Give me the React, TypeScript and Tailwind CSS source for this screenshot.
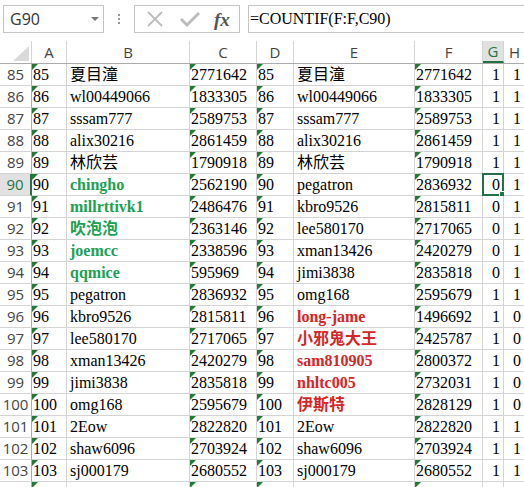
import type { ReactElement } from "react";

type Row = {
  n: number;
  b: string;
  c: string;
  e: string;
  f: string;
  g: number;
  h: number;
  bColor?: "green";
  eColor?: "red";
};

const rows: Row[] = [
  { n: 85, b: "夏目潼", c: "2771642", e: "夏目潼", f: "2771642", g: 1, h: 1 },
  { n: 86, b: "wl00449066", c: "1833305", e: "wl00449066", f: "1833305", g: 1, h: 1 },
  { n: 87, b: "sssam777", c: "2589753", e: "sssam777", f: "2589753", g: 1, h: 1 },
  { n: 88, b: "alix30216", c: "2861459", e: "alix30216", f: "2861459", g: 1, h: 1 },
  { n: 89, b: "林欣芸", c: "1790918", e: "林欣芸", f: "1790918", g: 1, h: 1 },
  { n: 90, b: "chingho", c: "2562190", e: "pegatron", f: "2836932", g: 0, h: 1, bColor: "green" },
  { n: 91, b: "millrttivk1", c: "2486476", e: "kbro9526", f: "2815811", g: 0, h: 1, bColor: "green" },
  { n: 92, b: "吹泡泡", c: "2363146", e: "lee580170", f: "2717065", g: 0, h: 1, bColor: "green" },
  { n: 93, b: "joemcc", c: "2338596", e: "xman13426", f: "2420279", g: 0, h: 1, bColor: "green" },
  { n: 94, b: "qqmice", c: "595969", e: "jimi3838", f: "2835818", g: 0, h: 1, bColor: "green" },
  { n: 95, b: "pegatron", c: "2836932", e: "omg168", f: "2595679", g: 1, h: 1 },
  { n: 96, b: "kbro9526", c: "2815811", e: "long-jame", f: "1496692", g: 1, h: 0, eColor: "red" },
  { n: 97, b: "lee580170", c: "2717065", e: "小邪鬼大王", f: "2425787", g: 1, h: 0, eColor: "red" },
  { n: 98, b: "xman13426", c: "2420279", e: "sam810905", f: "2800372", g: 1, h: 0, eColor: "red" },
  { n: 99, b: "jimi3838", c: "2835818", e: "nhltc005", f: "2732031", g: 1, h: 0, eColor: "red" },
  { n: 100, b: "omg168", c: "2595679", e: "伊斯特", f: "2828129", g: 1, h: 0, eColor: "red" },
  { n: 101, b: "2Eow", c: "2822820", e: "2Eow", f: "2822820", g: 1, h: 1 },
  { n: 102, b: "shaw6096", c: "2703924", e: "shaw6096", f: "2703924", g: 1, h: 1 },
  { n: 103, b: "sj000179", c: "2680552", e: "sj000179", f: "2680552", g: 1, h: 1 },
  { n: 104, b: "", c: "", e: "", f: "", g: 1, h: 1 },
];

const serif = "font-['Liberation_Serif','Noto_Sans_CJK_TC',serif]";
const sans = "font-['Open_Sans','Liberation_Sans',sans-serif]";

function Tri(): ReactElement {
  return (
    <span className="absolute left-0 top-0 h-0 w-0 border-t-[6px] border-r-[6px] border-t-[#217a36] border-r-transparent" />
  );
}

function Cell({
  w,
  children,
  tri,
  right,
  pad = "pl-[1px]",
  color = "text-black",
}: {
  w: string;
  children?: React.ReactNode;
  tri?: boolean;
  right?: boolean;
  pad?: string;
  color?: string;
}): ReactElement {
  return (
    <div
      className={`relative h-[22px] shrink-0 overflow-visible whitespace-nowrap border-b border-r border-[#d4d4d4] text-[16px] leading-[22px] ${serif} ${w} ${
        right ? "pr-[3px] text-right" : pad
      } ${color}`}
    >
      {tri && <Tri />}
      {children}
    </div>
  );
}

export default function App(): ReactElement {
  return (
    <div className="h-[487px] w-[524px] overflow-hidden bg-white">
      {/* formula bar */}
      <div className="flex h-[41px] items-start pt-[5px]">
        <div className="ml-[3px] flex h-[28px] w-[101px] items-center justify-between border border-[#c6c6c6] pl-[6px] pr-[4px]">
          <span className={`text-[16px] text-[#333] ${sans}`}>G90</span>
          <span className="h-0 w-0 border-l-[4px] border-r-[4px] border-t-[4px] border-l-transparent border-r-transparent border-t-[#777]" />
        </div>
        <div className="flex h-[28px] w-[30px] flex-col items-center justify-center gap-[2px]">
          <span className="h-[2px] w-[2px] bg-[#999]" />
          <span className="h-[2px] w-[2px] bg-[#999]" />
          <span className="h-[2px] w-[2px] bg-[#999]" />
        </div>
        <div className="flex h-[28px] w-[106px] items-center border border-[#c6c6c6]">
          <svg width="20" height="20" viewBox="0 0 20 20" className="ml-[10px]">
            <path d="M3 3 L17 17 M17 3 L3 17" stroke="#bdbdbd" strokeWidth="1.8" fill="none" />
          </svg>
          <svg width="22" height="20" viewBox="0 0 22 20" className="ml-[14px]">
            <path d="M2 10 L8 16 L20 4" stroke="#bdbdbd" strokeWidth="3" fill="none" />
          </svg>
          <span className="ml-[13px] font-['Liberation_Serif',serif] text-[19px] font-bold italic leading-none text-[#555]">
            fx
          </span>
        </div>
        <div className="ml-[8px] flex h-[28px] flex-1 items-center border-y border-l border-[#c6c6c6] pl-[1px]">
          <span className={`text-[16px] text-black ${serif}`}>=COUNTIF(F:F,C90)</span>
        </div>
      </div>

      {/* column headers */}
      <div className={`flex h-[23px] border-b border-[#ababab] text-[15px] text-[#444] ${sans}`}>
        <div className="relative w-[32px] shrink-0 border-r border-[#d4d4d4]">
          <span className="absolute bottom-[2px] right-[2px] h-0 w-0 border-b-[15px] border-l-[16px] border-b-[#dadada] border-l-transparent" />
        </div>
        {[
          ["A", "w-[35px]"],
          ["B", "w-[123px]"],
          ["C", "w-[67px]"],
          ["D", "w-[37px]"],
          ["E", "w-[121px]"],
          ["F", "w-[68px]"],
        ].map(([l, w]) => (
          <div
            key={l}
            className={`flex shrink-0 items-center justify-center border-r border-[#d4d4d4] ${w}`}
          >
            {l}
          </div>
        ))}
        <div className="flex w-[21px] shrink-0 items-center justify-center border-b-2 border-r border-b-[#217346] border-r-[#d4d4d4] bg-[#e1e1e1] text-[#217346]">
          G
        </div>
        <div className="flex w-[21px] shrink-0 items-center justify-center">H</div>
      </div>

      {/* rows */}
      {rows.map((r) => {
        const sel = r.n === 90;
        const shown = r.n < 104;
        return (
          <div key={r.n} className="flex">
            <div
              className={`flex h-[22px] w-[32px] shrink-0 items-center justify-center border-b border-[#d4d4d4] text-[15px] ${sans} ${
                sel
                  ? "border-r-2 border-r-[#217346] bg-[#e1e1e1] text-[#217346]"
                  : "border-r border-r-[#ababab] text-[#444]"
              }`}
            >
              {shown ? r.n : ""}
            </div>
            <Cell w="w-[35px]" tri>
              {shown ? r.n : ""}
            </Cell>
            <Cell
              w="w-[123px]"
              pad="pl-[3px]"
              color={r.bColor ? "font-bold text-[#21a052]" : "text-black"}
            >
              {r.b}
            </Cell>
            <Cell w="w-[67px]" tri>
              {r.c}
            </Cell>
            <Cell w="w-[37px]" tri>
              {shown ? r.n : ""}
            </Cell>
            <Cell
              w="w-[121px]"
              pad="pl-[3px]"
              color={r.eColor ? "font-bold text-[#d42626]" : "text-black"}
            >
              {r.e}
            </Cell>
            <Cell w="w-[68px]" tri>
              {r.f}
            </Cell>
            <Cell w="w-[21px]" right>
              {shown ? r.g : ""}
              {sel && (
                <>
                  <span className="absolute -left-px -top-px h-[23px] w-[22px] border-2 border-[#217346]" />
                  <span className="absolute bottom-[-2px] right-[-2px] h-[6px] w-[6px] border border-white bg-[#217346]" />
                </>
              )}
            </Cell>
            <Cell w="w-[21px]" right>
              {shown ? r.h : ""}
            </Cell>
          </div>
        );
      })}
    </div>
  );
}
